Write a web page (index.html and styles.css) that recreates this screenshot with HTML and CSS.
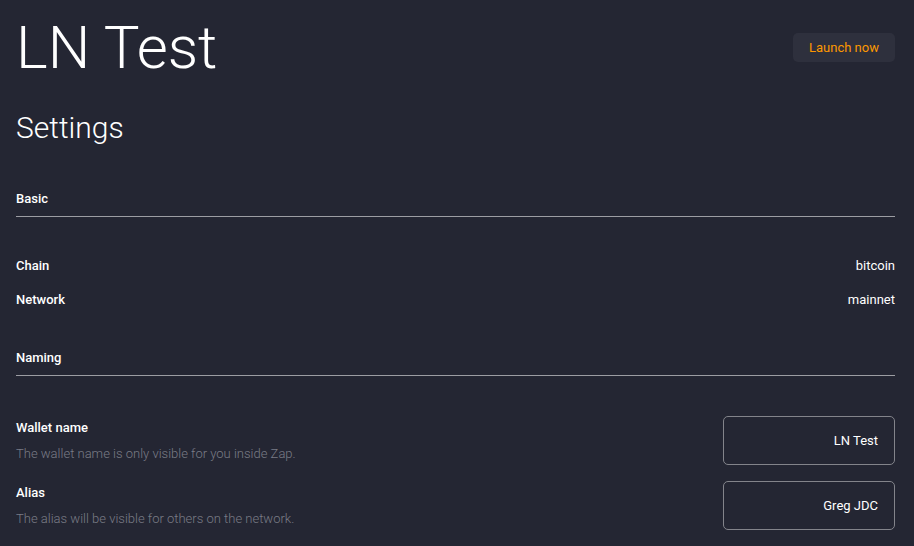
FILE: index.html
```html
<!DOCTYPE html>
<html>
<head>
<meta charset="utf-8">
<link rel="stylesheet" href="styles.css">
</head>
<body>
<div class="page">
  <header class="header">
    <h1 class="title">LN Test</h1>
    <button class="launch">Launch now</button>
  </header>
  <h2 class="subtitle">Settings</h2>

  <div class="section-head">Basic</div>
  <div class="kv-list">
    <div class="kv"><span class="label">Chain</span><span class="value">bitcoin</span></div>
    <div class="kv"><span class="label">Network</span><span class="value">mainnet</span></div>
  </div>

  <div class="section-head">Naming</div>
  <div class="field-list">
    <div class="field">
      <div class="field-text">
        <div class="label">Wallet name</div>
        <div class="desc">The wallet name is only visible for you inside Zap.</div>
      </div>
      <div class="input">LN Test</div>
    </div>
    <div class="field">
      <div class="field-text">
        <div class="label">Alias</div>
        <div class="desc">The alias will be visible for others on the network.</div>
      </div>
      <div class="input">Greg JDC</div>
    </div>
  </div>
</div>
</body>
</html>
```
FILE: styles.css
```css
html, body {
  margin: 0;
  padding: 0;
  background: #242633;
  height: 100%;
  overflow: hidden;
}
body {
  font-family: Roboto, "Liberation Sans", sans-serif;
  color: #ffffff;
}
.page {
  padding: 12px 19px 0 16px;
}
.header {
  display: flex;
  justify-content: space-between;
  align-items: flex-start;
}
.title {
  margin: 0;
  font-size: 60px;
  font-weight: 300;
  line-height: 72px;
}
.launch {
  margin-top: 21px;
  height: 29px;
  padding: 0 16px;
  border: none;
  border-radius: 5px;
  background: #2e303d;
  color: #fd9800;
  font-family: Roboto, "Liberation Sans", sans-serif;
  font-size: 13px;
  font-weight: 400;
  line-height: 17px;
}
.subtitle {
  margin: 26px 0 0 0;
  font-size: 30px;
  font-weight: 300;
  line-height: 36px;
}
.section-head {
  margin-top: 44px;
  font-size: 13px;
  font-weight: 500;
  line-height: 17px;
  padding-bottom: 9px;
  border-bottom: 1px solid #9c9da3;
}
.kv-list {
  margin-top: 40px;
  display: flex;
  flex-direction: column;
  gap: 17px;
}
.kv {
  display: flex;
  justify-content: space-between;
  font-size: 13px;
  line-height: 17px;
}
.label {
  font-size: 13px;
  font-weight: 500;
  line-height: 17px;
}
.value {
  font-weight: 400;
}
.kv-list + .section-head {
  margin-top: 41px;
}
.field-list {
  margin-top: 40px;
  display: flex;
  flex-direction: column;
  gap: 16px;
}
.field {
  display: flex;
  justify-content: space-between;
  align-items: center;
}
.field-text {
  display: flex;
  flex-direction: column;
  gap: 9px;
}
.desc {
  font-size: 13px;
  font-weight: 300;
  line-height: 17px;
  color: #7a7c86;
}
.input {
  box-sizing: border-box;
  width: 172px;
  height: 49px;
  border: 1px solid #83848b;
  border-radius: 5px;
  padding: 0 16px;
  display: flex;
  align-items: center;
  justify-content: flex-end;
  font-size: 13px;
  line-height: 17px;
}
```
